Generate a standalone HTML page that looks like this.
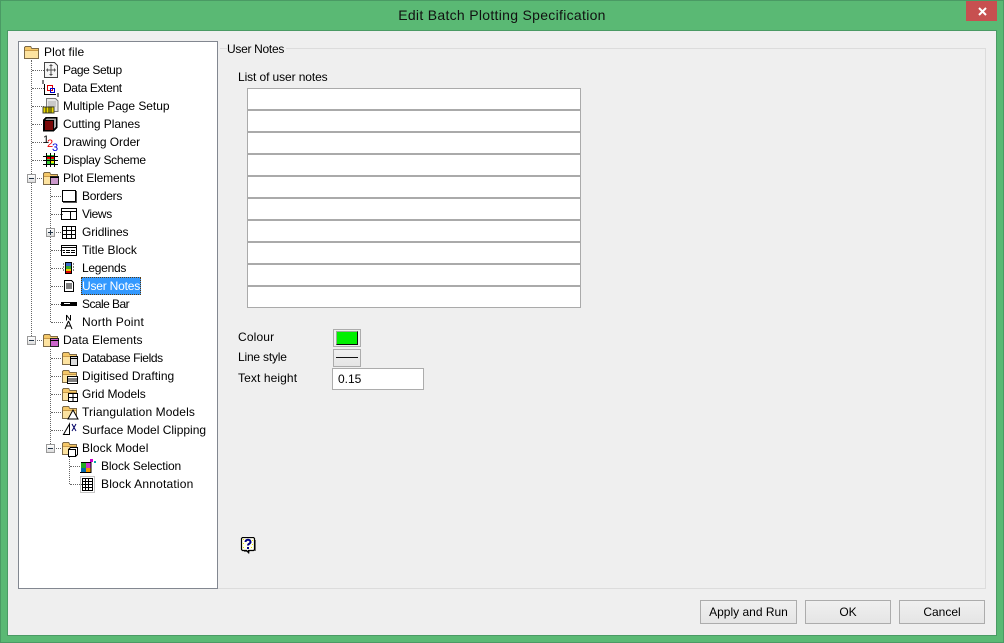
<!DOCTYPE html>
<html><head><meta charset="utf-8"><style>
html,body{margin:0;padding:0}
body{width:1004px;height:643px;position:relative;overflow:hidden;background:#5ab974;font:12px "Liberation Sans",sans-serif;color:#000}
div,span,svg{position:absolute}
.t{white-space:nowrap;line-height:16px;height:16px}
.h{height:0;border-top:1px dotted #666;width:12px}
.v{width:0;border-left:1px dotted #666}
.b{background:#fff;border:1px solid #aaa;box-sizing:border-box;left:247px;width:334px;height:22px}
.btn{box-sizing:border-box;border:1px solid #acacac;background:linear-gradient(#f0f0f0,#e5e5e5);top:600px;height:24px;text-align:center;line-height:22px}
.x{width:9px;height:9px;box-sizing:border-box;border:1px solid #999;background:linear-gradient(#fff,#ddd)}
.x:before{content:"";position:absolute;left:1px;top:3px;width:5px;height:1px;background:#234}
.p:after{content:"";position:absolute;left:3px;top:1px;width:1px;height:5px;background:#234}
</style></head><body>
<div style="left:0;top:0;width:1002px;height:641px;border:1px solid #4a9a64"></div>
<div class="t" style="left:0;width:1004px;top:7px;text-align:center;font-size:14px;letter-spacing:.3px;color:#111">Edit Batch Plotting Specification</div>
<div style="left:966px;top:1px;width:31px;height:20px;background:#c75050"></div>
<svg style="left:978px;top:7px" width="9" height="9"><path d="M1 1L8 8M8 1L1 8" stroke="#fff" stroke-width="2"/></svg>
<div style="left:7px;top:30px;width:990px;height:606px;background:#efefef;border:1px solid #4a9a64;box-sizing:border-box"></div>

<div style="left:220px;top:48px;width:7px;height:1px;background:#dcdcdc"></div>
<div style="left:286px;top:48px;width:700px;height:1px;background:#dcdcdc"></div>
<div style="left:985px;top:48px;width:1px;height:541px;background:#dcdcdc"></div>
<div style="left:218px;top:588px;width:768px;height:1px;background:#dcdcdc"></div>
<div class="t" style="left:227px;top:41px;letter-spacing:-.3px">User Notes</div>
<div class="t" style="left:238px;top:69px;letter-spacing:-.1px">List of user notes</div>
<div class="b" style="top:88px"></div><div class="b" style="top:110px"></div><div class="b" style="top:132px"></div><div class="b" style="top:154px"></div><div class="b" style="top:176px"></div><div class="b" style="top:198px"></div><div class="b" style="top:220px"></div><div class="b" style="top:242px"></div><div class="b" style="top:264px"></div><div class="b" style="top:286px"></div>
<div class="t" style="left:238px;top:329px;letter-spacing:.15px">Colour</div>
<div class="t" style="left:238px;top:349px;letter-spacing:-.2px">Line style</div>
<div class="t" style="left:238px;top:370px;letter-spacing:.1px">Text height</div>
<div style="left:333px;top:329px;width:28px;height:18px;box-sizing:border-box;border:1px solid #acacac;background:#eee"></div>
<div style="left:336px;top:331px;width:22px;height:14px;box-sizing:border-box;background:#00f000;border:1px solid #0a0a0a;border-left-color:#9a9;border-top-color:#9a9"></div>
<div style="left:333px;top:349px;width:28px;height:18px;box-sizing:border-box;border:1px solid #acacac;background:linear-gradient(#f0f0f0,#e5e5e5)"></div>
<div style="left:336px;top:357px;width:22px;height:1px;background:#111"></div>
<div style="left:332px;top:368px;width:92px;height:22px;box-sizing:border-box;border:1px solid #acacac;background:#fff"></div>
<div class="t" style="left:338px;top:371px">0.15</div>
<svg style="left:240px;top:537px" width="17" height="18"><path d="M4 3H16V14H10L9 17L7 15H4Z" fill="#777"/><path d="M2.500 .5H13.500L14.500 1.500V12.500L13.500 13.500H8.500V15.500L6.500 13.500H2.500L1.500 12.500V1.500Z" fill="#fffff0" stroke="#000" stroke-width="1.200"/><path d="M3 2h1v1H3zM5 4h1v1H5zM3 6h1v1H3zM12 3h1v1h-1zM12 7h1v1h-1zM3 10h1v1H3zM11 10h1v1h-1z" fill="#e6e600"/><path d="M5.500 5C5.500 2 10.500 2 10.500 5C10.500 7 8 6.500 8 8.500" fill="none" stroke="#008" stroke-width="2"/><rect x="7" y="10" width="2" height="2" fill="#008"/></svg>
<div class="btn" style="left:700px;width:97px">Apply and Run</div>
<div class="btn" style="left:805px;width:86px">OK</div>
<div class="btn" style="left:899px;width:86px">Cancel</div>

<div style="left:18px;top:41px;width:200px;height:548px;box-sizing:border-box;background:#fff;border:1px solid #828790"></div>
<div class="v" style="left:31px;top:60px;height:280px"></div>
<div class="v" style="left:50px;top:187px;height:135px"></div>
<div class="v" style="left:50px;top:349px;height:99px"></div>
<div class="v" style="left:69px;top:457px;height:27px"></div>
<div class="h" style="left:32px;top:70px"></div><div class="h" style="left:32px;top:88px"></div><div class="h" style="left:32px;top:106px"></div><div class="h" style="left:32px;top:124px"></div><div class="h" style="left:32px;top:142px"></div><div class="h" style="left:32px;top:160px"></div><div class="h" style="left:32px;top:178px"></div><div class="h" style="left:32px;top:340px"></div>
<div class="h" style="left:51px;top:196px"></div><div class="h" style="left:51px;top:214px"></div><div class="h" style="left:51px;top:232px"></div><div class="h" style="left:51px;top:250px"></div><div class="h" style="left:51px;top:268px"></div><div class="h" style="left:51px;top:286px"></div><div class="h" style="left:51px;top:304px"></div><div class="h" style="left:51px;top:322px"></div>
<div class="h" style="left:51px;top:358px"></div><div class="h" style="left:51px;top:376px"></div><div class="h" style="left:51px;top:394px"></div><div class="h" style="left:51px;top:412px"></div><div class="h" style="left:51px;top:430px"></div><div class="h" style="left:51px;top:448px"></div>
<div class="h" style="left:70px;top:466px"></div><div class="h" style="left:70px;top:484px"></div>
<div class="x" style="left:27px;top:174px"></div><div class="x" style="left:27px;top:336px"></div><div class="x" style="left:46px;top:444px"></div><div class="x p" style="left:46px;top:228px"></div>

<div style="left:81px;top:277px;width:60px;height:18px;box-sizing:border-box;background:#3399ff;border:1px dotted #5a3a10"></div>

<div class="t" style="left:44px;top:44px;letter-spacing:.1px">Plot file</div>
<div class="t" style="left:63px;top:62px;letter-spacing:-.4px">Page Setup</div>
<div class="t" style="left:63px;top:80px;letter-spacing:-.36px">Data Extent</div>
<div class="t" style="left:63px;top:98px;letter-spacing:-.05px">Multiple Page Setup</div>
<div class="t" style="left:63px;top:116px;letter-spacing:-.07px">Cutting Planes</div>
<div class="t" style="left:63px;top:134px;letter-spacing:-.07px">Drawing Order</div>
<div class="t" style="left:63px;top:152px;letter-spacing:-.28px">Display Scheme</div>
<div class="t" style="left:63px;top:170px;letter-spacing:-.15px">Plot Elements</div>
<div class="t" style="left:82px;top:188px;letter-spacing:-.28px">Borders</div>
<div class="t" style="left:82px;top:206px;letter-spacing:-.4px">Views</div>
<div class="t" style="left:82px;top:224px;letter-spacing:-.1px">Gridlines</div>
<div class="t" style="left:82px;top:242px">Title Block</div>
<div class="t" style="left:82px;top:260px;letter-spacing:-.28px">Legends</div>
<div class="t" style="left:82px;top:278px;color:#fff;letter-spacing:-.2px">User Notes</div>
<div class="t" style="left:82px;top:296px;letter-spacing:-.55px">Scale Bar</div>
<div class="t" style="left:82px;top:314px;letter-spacing:.18px">North Point</div>
<div class="t" style="left:63px;top:332px;letter-spacing:.07px">Data Elements</div>
<div class="t" style="left:82px;top:350px;letter-spacing:-.4px">Database Fields</div>
<div class="t" style="left:82px;top:368px;letter-spacing:.05px">Digitised Drafting</div>
<div class="t" style="left:82px;top:386px;letter-spacing:-.1px">Grid Models</div>
<div class="t" style="left:82px;top:404px;letter-spacing:.1px">Triangulation Models</div>
<div class="t" style="left:82px;top:422px">Surface Model Clipping</div>
<div class="t" style="left:82px;top:440px;letter-spacing:.1px">Block Model</div>
<div class="t" style="left:101px;top:458px;letter-spacing:-.13px">Block Selection</div>
<div class="t" style="left:101px;top:476px;letter-spacing:.19px">Block Annotation</div>

<svg style="left:0;top:0" width="220" height="500" fill="none" stroke="#000" shape-rendering="crispEdges">
<defs>
<g id="f"><path d="M.5 13.500V2.500L1.500 1.500H6.500L8 3.500H14.500V13.500Z" fill="#f5c868" stroke="#7d6a48"/><path d="M1 13V6H14V13Z" fill="#fde3a0" stroke="none"/><path d="M1 5.500H14" stroke="#c99a48"/></g>
</defs>
<use href="#f" x="24" y="45"/>
<path d="M44.500 62.500H54.500L57.500 65.500V77.500H44.500Z" fill="#f6f6f6" stroke="#444"/><path d="M51 64V76M46 70H56M49.500 65.500H52.500M49.500 74.500H52.500M47.500 68.500V71.500M54.500 68.500V71.500" stroke="#555"/>
<path d="M44.500 84V94.500H56" stroke="#000"/><rect x="47.500" y="85.500" width="5" height="5" stroke="#d00"/><rect x="50.500" y="88.500" width="4" height="4" stroke="#00c"/><path d="M42 81h2M57 94h2M42 83h2M57 96h2" stroke="#000"/>
<path d="M46.500 98.500H55.500L58 101V111.500H46.500Z" fill="#e8e8e8" stroke="#777"/><path d="M48 102H56M48 104H56M48 106H56" stroke="#aaa"/><rect x="43" y="107" width="11" height="6" fill="#e6d800" stroke="#443"/><path d="M46 107V113M49 107V113M51 107V113" stroke="#221"/>
<path d="M43.500 120.500L46.500 117.500H56.500V127.500L53.500 130.500H43.500Z" fill="#aaa" stroke="#000" stroke-width="1.500"/><rect x="44.500" y="120.500" width="9" height="10" fill="#7a0808" stroke="#000" stroke-width="1.300"/>
<g stroke="none" style="font:11px 'Liberation Sans',sans-serif"><text x="43" y="143" fill="#000">1</text><text x="47" y="147" fill="#e00">2</text><text x="52" y="151" fill="#00d">3</text></g>
<rect x="46" y="155" width="9" height="9" fill="#3c3" stroke="none"/><rect x="47" y="156" width="3" height="3" fill="#e00" stroke="none"/><rect x="51" y="156" width="3" height="3" fill="#e00" stroke="none"/><rect x="51" y="160" width="3" height="3" fill="#ee0" stroke="none"/><path d="M43 156.500H58M43 160.500H58M43 164.500H58M46.500 153V167M50.500 153V167M54.500 153V167" stroke="#000"/>
<use href="#f" x="43" y="171"/><rect x="50.500" y="176.500" width="8" height="8" fill="#c9c" stroke="#222"/><path d="M50 177.500H59" stroke="#000"/>
<rect x="62.500" y="190.500" width="13" height="11" fill="#fff" stroke="#000"/><path d="M63 202.500H76.500V191" stroke="#555"/>
<rect x="61.500" y="208.500" width="15" height="11" stroke="#000"/><path d="M62 211.500H76M70.500 212V219" stroke="#000"/>
<path d="M62.500 226.500H75.500V238.500H62.500ZM62.500 230.500H75.500M62.500 234.500H75.500M66.500 226.500V238.500M71.500 226.500V238.500" stroke="#000"/>
<rect x="61.500" y="245.500" width="15" height="10" stroke="#000"/><path d="M62 247.500H76M63 250.500H75M63 252.500H75" stroke="#000"/><path d="M65.500 249V255M70.500 249V255" stroke="#fff"/>
<rect x="66" y="263" width="5" height="3" fill="#36c" stroke="none"/><rect x="66" y="266" width="5" height="3" fill="#3a3" stroke="none"/><rect x="66" y="269" width="5" height="2" fill="#ec0" stroke="none"/><rect x="66" y="271" width="5" height="2" fill="#d00" stroke="none"/><path d="M65.500 262.500V273.500H71.500V262.500ZM63 264H64M63 267H64M63 270H64M73 264H74M73 267H74M73 270H74" stroke="#000"/>
<path d="M64.500 280.500H71.500L73.500 282.500V291.500H64.500ZM66 284H72M66 286H72M66 288H72" stroke="#000" fill="#fff"/>
<rect x="61" y="302" width="16" height="4" fill="#000" stroke="none"/><rect x="64" y="303" width="6" height="1" fill="#fff" stroke="none"/>
<path d="M66.500 315V320.500M66.500 315L70.500 320.500M70.500 315V320.500" stroke="#000" shape-rendering="auto"/><path d="M68.500 321L65 329M68.500 321L72 329M66 326H71" stroke="#000" shape-rendering="auto"/>
<use href="#f" x="43" y="333"/><rect x="50.500" y="338.500" width="8" height="8" fill="#c6c" stroke="#222"/><path d="M50 340.500H59" stroke="#000"/>
<use href="#f" x="62" y="351"/><path d="M70.500 356.500H77.500V365.500H70.500Z" fill="#ddd" stroke="#000"/><path d="M71 358.500H77" stroke="#000"/>
<use href="#f" x="62" y="369"/><path d="M67.500 376.500H77.500V383.500H67.500ZM68 379H77M68 381H77" fill="#fff" stroke="#000"/>
<use href="#f" x="62" y="387"/><path d="M68.500 393.500H77.500V401.500H68.500ZM73 394V401M69 397.500H77" fill="#fff" stroke="#000"/>
<use href="#f" x="62" y="405"/><path d="M73 410L68 419H78Z" fill="#fff" stroke="#000" shape-rendering="auto"/>
<path d="M69.500 424L63.500 434.500H69.500Z" stroke="#000" shape-rendering="auto"/><path d="M72 424L76 431M76 424L72 431" stroke="#006" shape-rendering="auto"/>
<use href="#f" x="62" y="441"/><path d="M68.500 449.500H75.500V456.500H68.500ZM68.500 449.500L70.500 447.500H77.500V454.500L75.500 456.500" fill="#fff" stroke="#000"/>
<g stroke="none"><rect x="81" y="463" width="5" height="5" fill="#2a2"/><rect x="86" y="463" width="5" height="5" fill="#c3c"/><rect x="81" y="468" width="5" height="4" fill="#06a"/><rect x="86" y="468" width="5" height="4" fill="#e90"/><rect x="90" y="459" width="3" height="3" fill="#c0c"/><rect x="94" y="461" width="2" height="2" fill="#0aa"/></g><path d="M81 462.500H91V472.500H80" stroke="#000"/>
<path d="M82.500 478.500H92.500V490.500H82.500ZM82.500 481.500H92.500M82.500 484.500H92.500M82.500 487.500H92.500M85.500 478V491M88.500 478V491" stroke="#000"/><rect x="80.500" y="476.500" width="14" height="16" stroke="#888" stroke-dasharray="1 1"/>
</svg>
</body></html>
